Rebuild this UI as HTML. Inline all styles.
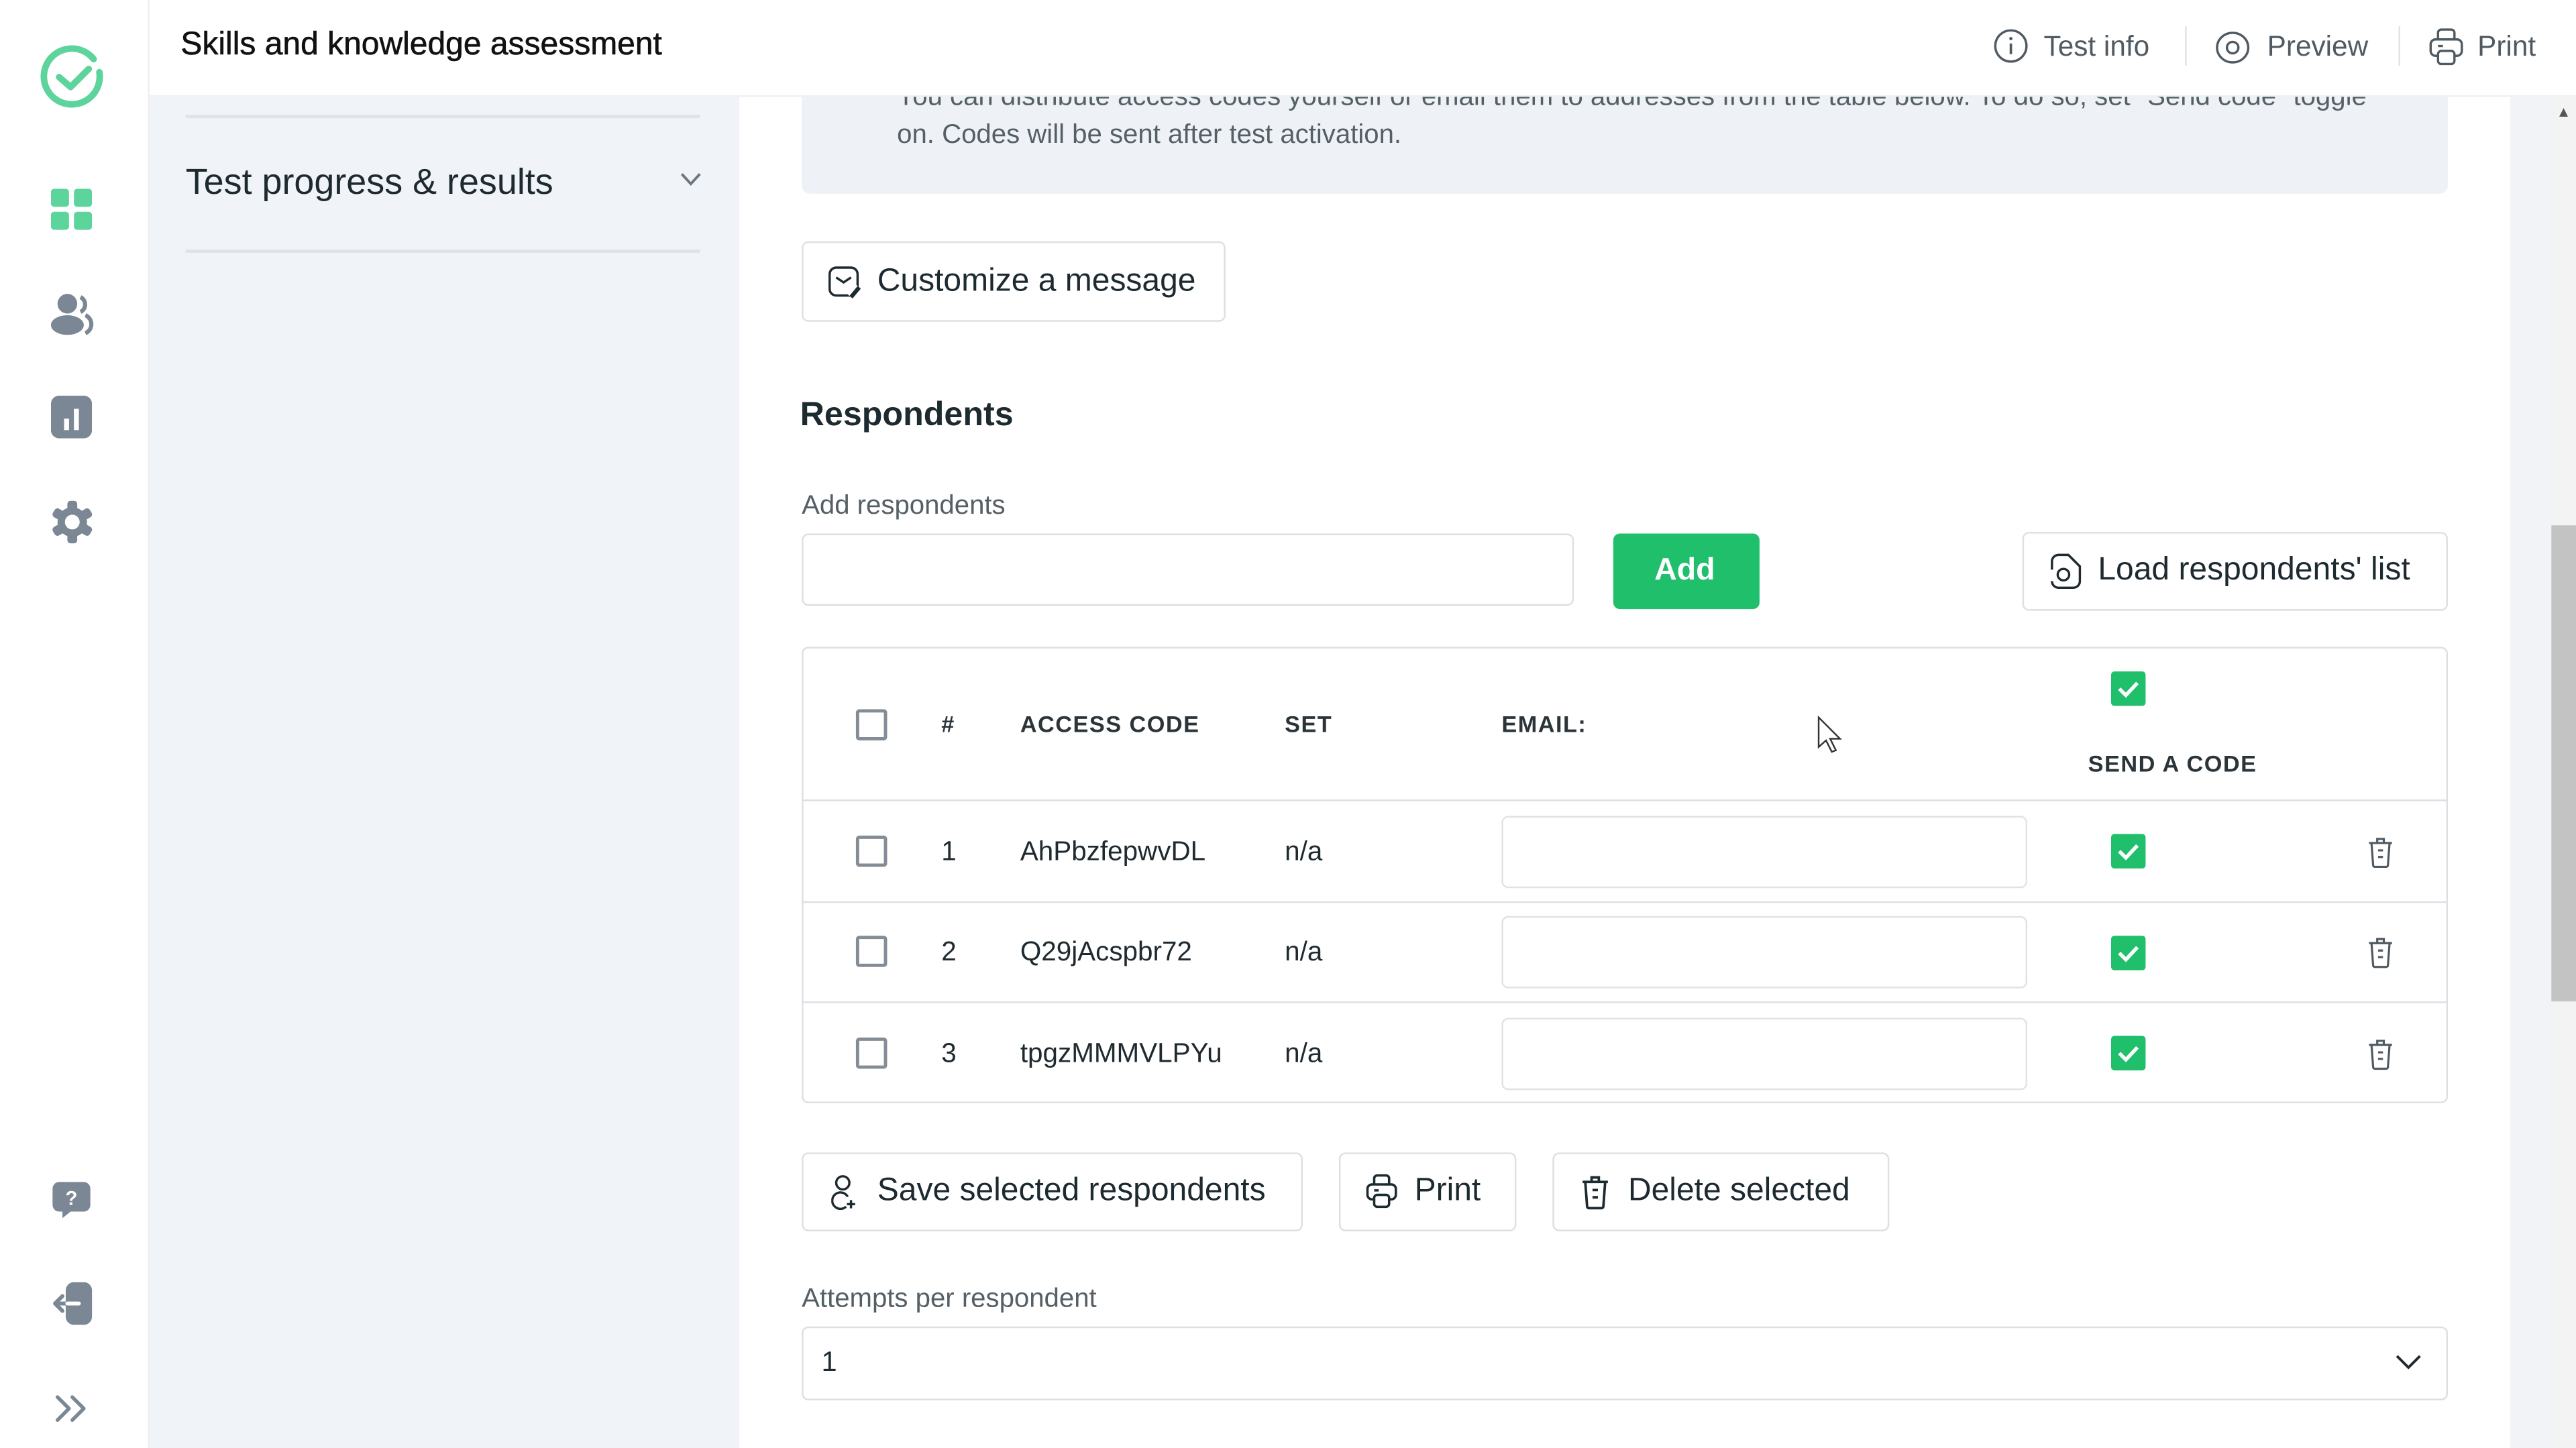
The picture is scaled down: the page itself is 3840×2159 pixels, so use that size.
<!DOCTYPE html>
<html><head><meta charset="utf-8"><style>
html,body{margin:0;padding:0;width:3840px;height:2159px;overflow:hidden;background:#fff}
#s{position:absolute;left:0;top:0;width:1568px;height:882px;transform:scale(2.449,2.4478);transform-origin:0 0;font-family:"Liberation Sans",sans-serif;color:#1d2a30}
.a{position:absolute}
.t{position:absolute;white-space:nowrap;line-height:1}
.btn{position:absolute;border:1px solid #dcdfe3;border-radius:4px;background:#fff;box-sizing:border-box}
.cb{position:absolute;width:19px;height:19px;border:2px solid #848d96;border-radius:2px;box-sizing:border-box;background:#fff}
.gc{position:absolute;width:21px;height:21px;background:#1fbf6c;border-radius:2px}
.th{font-size:14px;font-weight:bold;letter-spacing:0.6px;color:#2b3438}
.rt{font-size:16.5px;color:#1f2a30}
.inp{position:absolute;border:1px solid #dfe3e6;border-radius:4px;background:#fff;box-sizing:border-box}
.hl{position:absolute;left:488px;width:1002px;height:1px;background:#dcdfe3}
.bt{font-size:19.6px;color:#1d2a30}
</style></head><body><div id="s">
<div class="a" style="left:0;top:0;width:90px;height:882px;background:#fff;border-right:1px solid #eceff2"></div>
<svg class="a" style="left:24px;top:27px" width="42" height="42" viewBox="0 0 42 42"><path d="M33 9 A17 17 0 1 0 36.5 17" fill="none" stroke="#5dd49c" stroke-width="4" stroke-linecap="round"/><path d="M12 20 L19 26 L30 15" fill="none" stroke="#5dd49c" stroke-width="4" stroke-linecap="round" stroke-linejoin="round"/></svg>
<svg class="a" style="left:31px;top:115px" width="25" height="25" viewBox="0 0 25 25"><rect x="0" y="0" width="11" height="11" rx="2" fill="#5dd49c"/><rect x="14" y="0" width="11" height="11" rx="2" fill="#5dd49c"/><rect x="0" y="14" width="11" height="11" rx="2" fill="#5dd49c"/><rect x="14" y="14" width="11" height="11" rx="2" fill="#5dd49c"/></svg>
<svg class="a" style="left:31px;top:178px" width="26" height="26" viewBox="0 0 26 26"><circle cx="10" cy="7" r="6" fill="#7b8794"/><ellipse cx="10" cy="20" rx="10" ry="6" fill="#7b8794"/><path d="M18 3 a5 5 0 0 1 0 9" fill="none" stroke="#7b8794" stroke-width="2.5"/><path d="M21 14 a6 6 0 0 1 0 11" fill="none" stroke="#7b8794" stroke-width="2.5"/></svg>
<svg class="a" style="left:31px;top:241px" width="25" height="26" viewBox="0 0 25 26"><rect x="0" y="0" width="25" height="26" rx="5" fill="#7b8794"/><rect x="8" y="14" width="3" height="7" fill="#fff"/><rect x="14" y="8" width="3" height="13" fill="#fff"/></svg>
<svg class="a" style="left:31px;top:305px" width="26" height="26" viewBox="0 0 26 26"><g fill="#7b8794"><circle cx="13" cy="13" r="9"/><rect x="10" y="0" width="6" height="26" rx="2"/><rect x="10" y="0" width="6" height="26" rx="2" transform="rotate(60 13 13)"/><rect x="10" y="0" width="6" height="26" rx="2" transform="rotate(120 13 13)"/></g><circle cx="13" cy="13" r="4.5" fill="#fff"/></svg>
<svg class="a" style="left:31px;top:719px" width="25" height="25" viewBox="0 0 25 25"><path d="M5 1 H20 a4 4 0 0 1 4 4 V15 a4 4 0 0 1 -4 4 H12 L7 23 L7 19 H5 a4 4 0 0 1 -4 -4 V5 a4 4 0 0 1 4 -4Z" fill="#7b8794"/><text x="12.5" y="15" font-size="12" font-weight="bold" fill="#fff" text-anchor="middle" font-family="Liberation Sans">?</text></svg>
<svg class="a" style="left:31px;top:781px" width="26" height="26" viewBox="0 0 26 26"><rect x="9" y="0" width="16" height="26" rx="5" fill="#7b8794"/><path d="M17 13 H3 M7 8.5 L2.5 13 L7 17.5" fill="none" stroke="#7b8794" stroke-width="2.4" stroke-linecap="round" stroke-linejoin="round"/><path d="M10 13 H17" stroke="#fff" stroke-width="2.4" stroke-linecap="round"/></svg>
<svg class="a" style="left:33px;top:849px" width="22" height="18" viewBox="0 0 22 18"><path d="M2 2 L9 9 L2 16 M11 2 L18 9 L11 16" fill="none" stroke="#7b8794" stroke-width="2.2" stroke-linecap="round" stroke-linejoin="round"/></svg>
<div class="a" style="left:91px;top:58px;width:359px;height:824px;background:#f0f3f7"></div>
<div class="a" style="left:113px;top:70px;width:313px;height:2px;background:#dfe3e8"></div>
<div class="t" style="left:113px;top:100px;font-size:22px;color:#1d2a30">Test progress &amp; results</div>
<svg class="a" style="left:414px;top:105px" width="13" height="9" viewBox="0 0 13 9"><path d="M1 1 L6.5 7 L12 1" fill="none" stroke="#6b7680" stroke-width="1.6"/></svg>
<div class="a" style="left:113px;top:152px;width:313px;height:2px;background:#dfe3e8"></div>
<div class="a" style="left:91px;top:0;width:1477px;height:58px;background:#fff;border-bottom:1px solid #eef0f2"></div>
<div class="t" style="left:110px;top:18px;font-size:19.6px;color:#111;-webkit-text-stroke:0.25px #111">Skills and knowledge assessment</div>
<svg class="a" style="left:1213px;top:17px" width="22" height="22" viewBox="0 0 22 22"><circle cx="11" cy="11" r="9.5" fill="none" stroke="#505a62" stroke-width="1.4"/><path d="M11 9.5 V16" stroke="#505a62" stroke-width="1.5"/><circle cx="11" cy="6.5" r="1" fill="#505a62"/></svg>
<div class="t" style="left:1244px;top:20px;font-size:17.3px;color:#505a62">Test info</div>
<div class="a" style="left:1330px;top:16px;width:1px;height:24px;background:#dfe3e6"></div>
<svg class="a" style="left:1348px;top:18px" width="22" height="22" viewBox="0 0 22 22"><ellipse cx="11" cy="11" rx="9.5" ry="9" fill="none" stroke="#505a62" stroke-width="1.4"/><circle cx="11" cy="11" r="3.5" fill="none" stroke="#505a62" stroke-width="1.4"/></svg>
<div class="t" style="left:1380px;top:20px;font-size:17.3px;color:#505a62">Preview</div>
<div class="a" style="left:1460px;top:16px;width:1px;height:24px;background:#dfe3e6"></div>
<svg class="a" style="left:1478px;top:17px" width="22" height="24" viewBox="0 0 22 24"><path d="M6 7 V3 a2 2 0 0 1 2 -2 h6 a2 2 0 0 1 2 2 V7" fill="none" stroke="#505a62" stroke-width="1.4"/><rect x="1.5" y="7" width="19" height="10" rx="3" fill="none" stroke="#505a62" stroke-width="1.4"/><rect x="6" y="14" width="10" height="8" rx="2" fill="#fff" stroke="#505a62" stroke-width="1.4"/><path d="M6 11 h3" stroke="#505a62" stroke-width="1.4"/></svg>
<div class="t" style="left:1508px;top:20px;font-size:17.3px;color:#505a62">Print</div>
<div class="a" style="left:1528px;top:59px;width:40px;height:823px;background:#f1f3f6"></div>
<div class="a" style="left:1553px;top:59px;width:15px;height:823px;background:#f3f3f3"></div>
<div class="a" style="left:1553px;top:320px;width:15px;height:290px;background:#c3c3c3"></div>
<div class="t" style="left:1556px;top:64px;font-size:9px;color:#555">▲</div>
<div class="a" style="left:488px;top:59px;width:1002px;height:59px;background:#eef2f7;border-radius:0 0 5px 5px;overflow:hidden">
<div class="t" style="left:58px;top:-8px;font-size:16.4px;color:#555f66">You can distribute access codes yourself or email them to addresses from the table below. To do so, set "Send code" toggle</div>
<div class="t" style="left:58px;top:15px;font-size:16.4px;color:#555f66">on. Codes will be sent after test activation.</div>
</div>
<div class="btn" style="left:488px;top:147px;width:258px;height:49px"></div>
<svg class="a" style="left:504px;top:162px" width="21" height="20" viewBox="0 0 21 20"><rect x="1" y="1" width="17" height="17" rx="4" fill="none" stroke="#1d2a30" stroke-width="1.4"/><path d="M5 7 L9.5 10 L14 7" fill="none" stroke="#1d2a30" stroke-width="1.4"/><path d="M14 19 L19 13" stroke="#fff" stroke-width="5"/><path d="M14 19 L19 13" stroke="#1d2a30" stroke-width="2.5"/></svg>
<div class="t bt" style="left:534px;top:162px">Customize a message</div>
<div class="t" style="left:487px;top:243px;font-size:20.5px;font-weight:bold;color:#1d2a30">Respondents</div>
<div class="t" style="left:488px;top:300px;font-size:16.4px;color:#555f66">Add respondents</div>
<div class="inp" style="left:488px;top:325px;width:470px;height:44px;border-color:#dcdfe3"></div>
<div class="a" style="left:982px;top:325px;width:89px;height:46px;background:#1fbf6c;border-radius:4px"></div>
<div class="t" style="left:1007px;top:338px;font-size:19px;font-weight:bold;color:#fff">Add</div>
<div class="btn" style="left:1231px;top:324px;width:259px;height:48px"></div>
<svg class="a" style="left:1246px;top:337px" width="22" height="22" viewBox="0 0 22 22"><path d="M3 10 V5 a4 4 0 0 1 4 -4 H13 L20 8 V17 a4 4 0 0 1 -4 4 H7 a4 4 0 0 1 -4 -4" fill="none" stroke="#1d2a30" stroke-width="1.4"/><circle cx="10" cy="13" r="3.5" fill="none" stroke="#1d2a30" stroke-width="1.4"/></svg>
<div class="t bt" style="left:1277px;top:338px">Load respondents' list</div>
<div class="a" style="left:488px;top:394px;width:1002px;height:278px;border:1px solid #dcdfe3;border-radius:4px;box-sizing:border-box"></div>
<div class="hl" style="top:487px"></div>
<div class="hl" style="top:549px"></div>
<div class="hl" style="top:610px"></div>
<div class="cb" style="left:521px;top:432px"></div>
<div class="t th" style="left:573px;top:434px">#</div>
<div class="t th" style="left:621px;top:434px">ACCESS CODE</div>
<div class="t th" style="left:782px;top:434px">SET</div>
<div class="t th" style="left:914px;top:434px">EMAIL:</div>
<div class="t th" style="left:1271px;top:458px">SEND A CODE</div>
<div class="gc" style="left:1285px;top:409px"></div>
<svg class="a" style="left:1106px;top:436px" width="16" height="24" viewBox="0 0 16 24"><path d="M1 1 V19 L5.5 15 L9 22 L11.5 21 L8 14 L14 14 Z" fill="#fff" stroke="#333" stroke-width="1"/></svg>
<div class="cb" style="left:521px;top:509px"></div><div class="t rt" style="left:573px;top:511px">1</div><div class="t rt" style="left:621px;top:511px">AhPbzfepwvDL</div><div class="t rt" style="left:782px;top:511px">n/a</div>
<div class="inp" style="left:914px;top:497px;width:320px;height:44px"></div><div class="gc" style="left:1285px;top:508px"></div>
<div class="cb" style="left:521px;top:570px"></div><div class="t rt" style="left:573px;top:572px">2</div><div class="t rt" style="left:621px;top:572px">Q29jAcspbr72</div><div class="t rt" style="left:782px;top:572px">n/a</div>
<div class="inp" style="left:914px;top:558px;width:320px;height:44px"></div><div class="gc" style="left:1285px;top:570px"></div>
<div class="cb" style="left:521px;top:632px"></div><div class="t rt" style="left:573px;top:634px">3</div><div class="t rt" style="left:621px;top:634px">tpgzMMMVLPYu</div><div class="t rt" style="left:782px;top:634px">n/a</div>
<div class="inp" style="left:914px;top:620px;width:320px;height:44px"></div><div class="gc" style="left:1285px;top:631px"></div>
<svg width="0" height="0" style="position:absolute"><defs><symbol id="ck" viewBox="0 0 21 21"><path d="M5 10.5 L9 14.5 L16 7" fill="none" stroke="#fff" stroke-width="2.2"/></symbol><symbol id="tr" viewBox="0 0 16 20"><path d="M1 4.5 H15 M6 4.5 V2 H10 V4.5 M2.5 4.5 L3.5 18 a1 1 0 0 0 1 1 H11.5 a1 1 0 0 0 1 -1 L13.5 4.5 M6.5 9 H9.5 M6.5 13 H9.5" fill="none" stroke="#505a62" stroke-width="1.3"/></symbol></defs></svg>
<svg class="a" style="left:1285px;top:409px" width="21" height="21"><use href="#ck"/></svg>
<svg class="a" style="left:1285px;top:508px" width="21" height="21"><use href="#ck"/></svg>
<svg class="a" style="left:1285px;top:570px" width="21" height="21"><use href="#ck"/></svg>
<svg class="a" style="left:1285px;top:631px" width="21" height="21"><use href="#ck"/></svg>
<svg class="a" style="left:1441px;top:509px" width="16" height="20"><use href="#tr"/></svg>
<svg class="a" style="left:1441px;top:570px" width="16" height="20"><use href="#tr"/></svg>
<svg class="a" style="left:1441px;top:632px" width="16" height="20"><use href="#tr"/></svg>
<div class="btn" style="left:488px;top:702px;width:305px;height:48px"></div>
<svg class="a" style="left:506px;top:715px" width="16" height="22" viewBox="0 0 16 22"><circle cx="7" cy="5.5" r="4" fill="none" stroke="#1d2a30" stroke-width="1.4"/><path d="M10 14 a5 5 0 1 0 -1 6" fill="none" stroke="#1d2a30" stroke-width="1.4"/><path d="M12 16 V21 M9.5 18.5 H14.5" stroke="#1d2a30" stroke-width="1.4"/></svg>
<div class="t bt" style="left:534px;top:716px">Save selected respondents</div>
<div class="btn" style="left:815px;top:702px;width:108px;height:48px"></div>
<svg class="a" style="left:831px;top:715px" width="20" height="22" viewBox="0 0 22 24"><path d="M6 7 V3 a2 2 0 0 1 2 -2 h6 a2 2 0 0 1 2 2 V7" fill="none" stroke="#1d2a30" stroke-width="1.6"/><rect x="1.5" y="7" width="19" height="10" rx="3" fill="none" stroke="#1d2a30" stroke-width="1.6"/><rect x="6" y="14" width="10" height="8" rx="2" fill="#fff" stroke="#1d2a30" stroke-width="1.6"/><path d="M6 11 h3" stroke="#1d2a30" stroke-width="1.6"/></svg>
<div class="t bt" style="left:861px;top:716px">Print</div>
<div class="btn" style="left:945px;top:702px;width:205px;height:48px"></div>
<svg class="a" style="left:962px;top:715px" width="18" height="22" viewBox="0 0 16 20"><path d="M1 4.5 H15 M6 4.5 V2 H10 V4.5 M2.5 4.5 L3.5 18 a1 1 0 0 0 1 1 H11.5 a1 1 0 0 0 1 -1 L13.5 4.5 M6.5 9 H9.5 M6.5 13 H9.5" fill="none" stroke="#1d2a30" stroke-width="1.4"/></svg>
<div class="t bt" style="left:991px;top:716px">Delete selected</div>
<div class="t" style="left:488px;top:783px;font-size:16.4px;color:#555f66">Attempts per respondent</div>
<div class="inp" style="left:488px;top:808px;width:1002px;height:45px;border-color:#dcdfe3"></div>
<div class="t" style="left:500px;top:821px;font-size:17px;color:#1d2a30">1</div>
<svg class="a" style="left:1458px;top:825px" width="16" height="10" viewBox="0 0 16 10"><path d="M1 1 L8 8 L15 1" fill="none" stroke="#1d2a30" stroke-width="1.6"/></svg>
</div></body></html>
